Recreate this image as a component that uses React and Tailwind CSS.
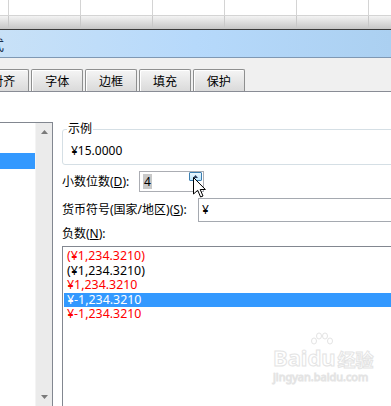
import React from 'react';

const tabs = ['对齐', '字体', '边框', '填充', '保护'];
const sheetCols = [0, 1, 2, 3, 4, 5];

const negatives = [
  { text: '(¥1,234.3210)', color: 'text-[#ff0000]' },
  { text: '(¥1,234.3210)', color: 'text-black' },
  { text: '¥1,234.3210', color: 'text-[#ff0000]' },
  { text: '¥-1,234.3210', color: 'text-white', selected: true },
  { text: '¥-1,234.3210', color: 'text-[#ff0000]' },
];

const Tri = ({ down, fill = '#7a7a7a', w = 7, h = 4 }) => (
  <svg width={w} height={h} viewBox={`0 0 ${w} ${h}`}>
    <path d={down ? `M0 0H${w}L${w / 2} ${h}z` : `M${w / 2} 0L${w} ${h}H0z`} fill={fill} />
  </svg>
);

const App = () => {
  return (
    <div className="relative w-[391px] h-[406px] overflow-hidden bg-white text-[12px] text-black font-['Noto_Sans','Noto_Sans_CJK_SC',sans-serif]">
      {/* sheet behind the dialog */}
      <div className="flex h-[16px] border-b border-[#d4d4d4]">
        <div className="w-[8px] shrink-0" />
        {sheetCols.map(c => (
          <div key={c} className="w-[72px] shrink-0 border-l border-[#d4d4d4]" />
        ))}
      </div>
      <div className="flex h-[13px] bg-gradient-to-b from-[#f3f3f3] to-[#c6c6c6]">
        <div className="w-[8px] shrink-0" />
        {sheetCols.map(c => (
          <div key={c} className="w-[72px] shrink-0 border-l border-[#c9c9c9]" />
        ))}
      </div>
      <div className="h-px bg-[#3b3b3b]" />

      {/* title bar */}
      <div className="h-[28px] border-b border-[#7f98b3] bg-gradient-to-r from-[#c8e1f7] via-[#b6d9fb] to-[#abd0f1] flex items-center overflow-hidden">
        <span className="ml-[-10px] text-[14px] leading-none text-[#1b2f4d] font-['Noto_Sans_CJK_SC',sans-serif]">式</span>
      </div>

      {/* tabs */}
      <div className="h-[34px] bg-[#f0f0f0] border-b border-[#898c95] flex items-end gap-[1.9px]">
        {tabs.map((t, i) => (
          <div
            key={t}
            className={`${i === 0 ? 'ml-[-22.7px]' : ''} w-[52px] h-[22px] shrink-0 border border-b-0 border-[#8e8f8f] rounded-t-[2px] bg-gradient-to-b from-[#f5f5f5] to-[#dadada] shadow-[inset_1px_1px_0_#ffffff] flex items-center justify-center pt-[1px] leading-none font-['Noto_Sans_CJK_SC',sans-serif]`}
          >
            {t}
          </div>
        ))}
      </div>

      {/* body */}
      <div className="flex h-[314px]">
        <div className="w-[53px] shrink-0 pt-[30px]">
          <div className="h-full flex border-t border-r border-[#828790]">
            <div className="w-[35px] shrink-0">
              <div className="mt-[30px] h-[16px] bg-[#3399ff]" />
            </div>
            <div className="w-[17px] shrink-0 bg-[#ebebeb] border-l border-[#f4f4f4] flex flex-col items-center justify-between pt-[7px] pb-[7px]">
              <Tri />
              <Tri down />
            </div>
          </div>
        </div>

        <div className="ml-[9px] flex-1 min-w-0 flex flex-col">
          <fieldset className="mt-[29px] w-[400px] border border-[#d5dfe5] rounded-[3px] pl-[4px]">
            <legend className="px-[1px] leading-[16px]">示例</legend>
            <div className="pl-[4px] pt-[6px] pb-[5px] leading-[16px]">¥15.0000</div>
          </fieldset>

          <div className="mt-[6px] flex items-center h-[21px]">
            <div className="w-[77px] shrink-0 leading-[16px]">小数位数(<u>D</u>):</div>
            <div className="w-[65px] h-[21px] shrink-0 border border-[#abadb3] flex items-center pl-[3px]">
              <span className="bg-[#c8c8c8] px-[1px] leading-[15px]">4</span>
              <div className="ml-auto mr-[1px] w-[13px] flex flex-col">
                <div className="h-[9px] border border-[#3c7fb1] rounded-[1px] bg-gradient-to-b from-[#eaf6fd] to-[#bee6fd] flex items-center justify-center">
                  <Tri w={5} h={3} fill="#2a3c5a" />
                </div>
                <div className="h-[9px] mt-[1px] flex items-center justify-center">
                  <Tri down w={5} h={3} fill="#4d6185" />
                </div>
              </div>
            </div>
          </div>

          <div className="mt-[6px] flex items-center h-[24px]">
            <div className="w-[136px] shrink-0 leading-[16px]">货币符号(国家/地区)(<u>S</u>):</div>
            <div className="w-[250px] h-[24px] shrink-0 border border-[#a5a9b0] flex items-center pl-[3px]">¥</div>
          </div>

          <div className="mt-[4px] leading-[16px]">负数(<u>N</u>):</div>

          <div className="mt-[4px] w-[400px] h-[170px] shrink-0 border border-[#828790] pt-[2px] pl-[1px]">
            {negatives.map((n, i) => (
              <div
                key={i}
                className={`h-[14.6px] leading-[14.6px] pl-[3px] text-[12.4px] ${n.color} ${n.selected ? 'bg-[#3399ff]' : ''}`}
              >
                {n.text}
              </div>
            ))}
          </div>
        </div>
      </div>

      {/* watermark */}
      <div className="absolute left-[273px] top-[346px] flex flex-col text-white [-webkit-text-stroke:1px_#e4e4e4]">
        <div className="flex items-end leading-none">
          <span className="text-[22px] font-bold">Bai</span>
          <span className="relative text-[22px] font-bold">
            du
            <svg className="absolute left-[2px] top-[-14px]" width="24" height="16" viewBox="0 0 24 16">
              <g fill="none" stroke="#e4e4e4" strokeWidth="1">
                <ellipse cx="5" cy="9" rx="2.5" ry="3" />
                <ellipse cx="10" cy="4" rx="2.5" ry="3" />
                <ellipse cx="16" cy="4" rx="2.5" ry="3" />
                <ellipse cx="21" cy="9" rx="2.5" ry="3" />
              </g>
            </svg>
          </span>
          <span className="ml-[2px] text-[18px] font-bold font-['Noto_Sans_CJK_SC',sans-serif]">经验</span>
        </div>
        <div className="mt-[3px] text-[11px] leading-none">jingyan.baidu.com</div>
      </div>

      {/* mouse cursor */}
      <svg className="absolute left-[193px] top-[177px]" width="14" height="21" viewBox="0 0 14 21">
        <path d="M0.5 0.5V17L4.7 13.3L7.6 20L10 19L7.2 12.5H12.4Z" fill="#ffffff" stroke="#000000" strokeWidth="1" strokeLinejoin="round" />
      </svg>
    </div>
  );
};

export default App;
